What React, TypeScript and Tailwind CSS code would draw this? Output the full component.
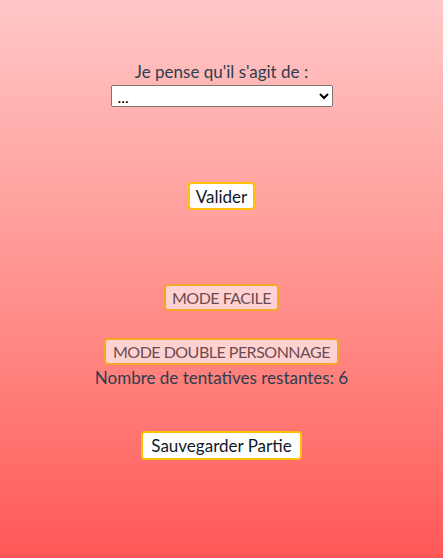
export default function App() {
  const font = { fontFamily: 'Lato, "Open Sans", sans-serif' };

  return (
    <div
      style={font}
      className="min-h-[558px] w-full bg-gradient-to-b from-[#ffc7c7] to-[#ff5757] flex flex-col items-center pt-[62px] text-[#2c3e50] text-[17px]"
    >
      <p className="h-[20px] leading-[20px]">Je pense qu'il s'agit de :</p>
      <select
        style={font}
        className="mt-[3px] h-[22px] w-[222px] bg-white border border-[#767676] rounded-[2px] text-[16px] text-black px-[2px] appearance-auto"
        defaultValue=""
      >
        <option value="">...</option>
      </select>

      <button className="mt-[75px] h-[28px] px-[6px] bg-white border-2 border-[#ffc107] rounded-[4px] text-[#111827] text-[17px] leading-none">
        Valider
      </button>

      <button className="mt-[74px] h-[27px] px-[6px] bg-[#ffd2d2] border-2 border-[#f5a62b] rounded-[4px] text-[#6e4b50] text-[16px] tracking-[-0.5px] leading-none">
        MODE FACILE
      </button>

      <button className="mt-[27px] h-[27px] px-[7px] bg-[#ffd2d2] border-2 border-[#f5a62b] rounded-[4px] text-[#6e4b50] text-[16px] tracking-[-0.5px] leading-none">
        MODE DOUBLE PERSONNAGE
      </button>
      <p className="mt-[3px] h-[20px] leading-[20px]">Nombre de tentatives restantes: 6</p>

      <button className="mt-[43px] h-[29px] px-[8px] bg-white border-2 border-[#ffc107] rounded-[4px] text-[#111827] text-[17px] leading-none">
        Sauvegarder Partie
      </button>
    </div>
  );
}
